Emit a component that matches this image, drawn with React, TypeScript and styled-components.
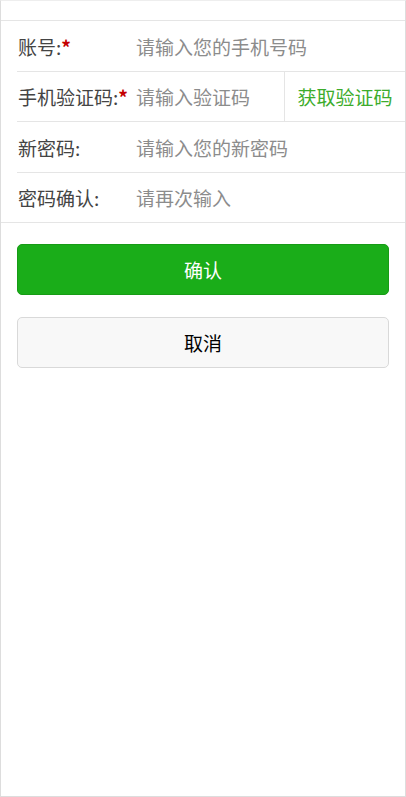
import React from "react";
import styled, { createGlobalStyle } from "styled-components";

const GlobalStyle = createGlobalStyle`
  html, body {
    margin: 0;
    padding: 0;
    background: #ffffff;
  }
  * {
    box-sizing: border-box;
  }
  body {
    font-family: "Noto Sans CJK SC", "Noto Sans", sans-serif;
  }
`;

const Page = styled.div`
  width: 406px;
  height: 797px;
  border: 1px solid #dddddd;
  border-top-color: #eeeeee;
  padding-top: 19px;
  background: #ffffff;
`;

const FormGroup = styled.div`
  border-top: 1px solid #e5e5e5;
  border-bottom: 1px solid #e5e5e5;
  padding-left: 16px;
`;

const Row = styled.div<{ $height: number }>`
  display: flex;
  align-items: stretch;
  height: ${(p) => p.$height}px;
  & + & {
    border-top: 1px solid #e5e5e5;
  }
`;

const Label = styled.label`
  width: 119px;
  flex-shrink: 0;
  display: flex;
  align-items: center;
  padding-left: 1px;
  font-size: 19px;
  color: #444444;
  white-space: nowrap;
`;

const Star = styled.span`
  color: #c40000;
  font-weight: bold;
`;

const Field = styled.input`
  flex: 1;
  min-width: 0;
  border: none;
  outline: none;
  background: transparent;
  padding: 0;
  font-family: inherit;
  font-size: 19px;
  color: #333333;
  &::placeholder {
    color: #8c8c8c;
  }
`;

const CodeButton = styled.button`
  width: 121px;
  flex-shrink: 0;
  border: none;
  border-left: 1px solid #e5e5e5;
  background: transparent;
  font-family: inherit;
  font-size: 19px;
  color: #3cac2c;
  padding: 0;
  cursor: pointer;
`;

const Actions = styled.div`
  display: flex;
  flex-direction: column;
  gap: 22px;
  padding: 21px 16px 0 16px;
`;

const Button = styled.button<{ $primary?: boolean }>`
  height: 51px;
  border-radius: 5px;
  font-family: inherit;
  font-size: 19px;
  cursor: pointer;
  border: 1px solid ${(p) => (p.$primary ? "#179b16" : "#d9d9d9")};
  background: ${(p) => (p.$primary ? "#1aad19" : "#f8f8f8")};
  color: ${(p) => (p.$primary ? "#ffffff" : "#000000")};
`;

const fields = [
  { label: "账号:", required: true, placeholder: "请输入您的手机号码", code: false, height: 50 },
  { label: "手机验证码:", required: true, placeholder: "请输入验证码", code: true, height: 50 },
  { label: "新密码:", required: false, placeholder: "请输入您的新密码", code: false, height: 51 },
  { label: "密码确认:", required: false, placeholder: "请再次输入", code: false, height: 50 },
];

const App = () => {
  return (
    <>
      <GlobalStyle />
      <Page>
        <FormGroup>
          {fields.map((f) => (
            <Row key={f.label} $height={f.height}>
              <Label>
                {f.label}
                {f.required && <Star>*</Star>}
              </Label>
              <Field
                type={f.label.includes("密码") ? "password" : "text"}
                placeholder={f.placeholder}
              />
              {f.code && <CodeButton>获取验证码</CodeButton>}
            </Row>
          ))}
        </FormGroup>
        <Actions>
          <Button $primary>确认</Button>
          <Button>取消</Button>
        </Actions>
      </Page>
    </>
  );
};

export default App;
